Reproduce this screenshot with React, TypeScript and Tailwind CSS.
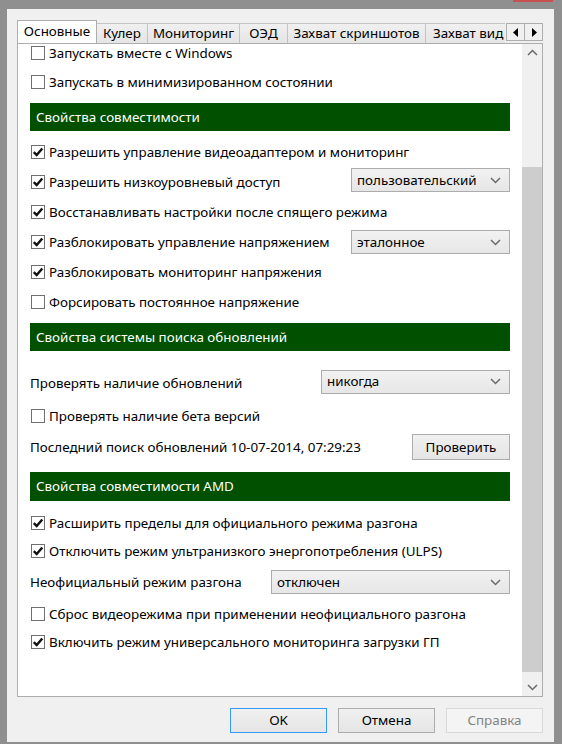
import React from "react";

function CheckBox({ checked }: { checked: boolean }) {
  return (
    <div className="w-[14px] h-[14px] border border-[#707070] bg-white flex items-center justify-center shrink-0">
      {checked && (
        <svg width="12" height="12" viewBox="0 0 12 12">
          <path d="M1.8 6.2 L4.7 9.1 L10.3 2.5" fill="none" stroke="#111" strokeWidth="2.4" />
        </svg>
      )}
    </div>
  );
}

function Chevron({ dir = "down" }: { dir?: "down" | "up" }) {
  return (
    <svg width="11" height="7" viewBox="0 0 11 7">
      <path
        d={dir === "down" ? "M1 1 L5.5 5.5 L10 1" : "M1 6 L5.5 1.5 L10 6"}
        fill="none"
        stroke="#6a6a6a"
        strokeWidth="1.5"
      />
    </svg>
  );
}

function Select({ value, w }: { value: string; w: string }) {
  return (
    <div
      className={`${w} h-[24px] border border-[#acacac] bg-gradient-to-b from-[#f2f2f2] to-[#e6e6e6] flex items-center justify-between pl-[5px] pr-[8px]`}
    >
      <span>{value}</span>
      <Chevron />
    </div>
  );
}

function CheckRow({ checked, label, h, children }: { checked: boolean; label: string; h: string; children?: React.ReactNode }) {
  return (
    <div className={`${h} flex items-center justify-between shrink-0`}>
      <div className="flex items-center gap-[4px] ml-[1px]">
        <CheckBox checked={checked} />
        <span>{label}</span>
      </div>
      {children}
    </div>
  );
}

function Header({ title, h, mt }: { title: string; h: string; mt: string }) {
  return (
    <div className={`${h} ${mt} bg-[#005000] text-white flex items-center px-[6px] shrink-0`}>{title}</div>
  );
}

const tabs = [
  { name: "Кулер", w: "w-[52px]" },
  { name: "Мониторинг", w: "w-[93px]" },
  { name: "ОЭД", w: "w-[49px]" },
  { name: "Захват скриншотов", w: "w-[139px]" },
];

export default function App() {
  return (
    <div className="w-[562px] h-[744px] bg-[#8f8f8f] relative overflow-hidden text-[13.4px] text-black [font-family:'Noto_Sans','Liberation_Sans',sans-serif]">
      {/* край кнопки закрытия окна */}
      <div className="absolute left-[513px] top-0 w-[40px] h-[2px] bg-[#c75050]" />

      <div className="ml-[7px] mt-[9px] w-[547px] h-[733px] bg-[#f0f0f0] pl-[10px] pt-[11px] flex flex-col">
        {/* Tabs */}
        <div className="w-[526px] h-[23px] flex items-end">
          <div className="w-[488px] h-[24px] flex items-end overflow-hidden">
            <div className="relative z-10 w-[80px] h-[24px] mb-[-1px] bg-white border border-b-0 border-[#adadad] flex items-center justify-center pb-[2px] shrink-0">
              Основные
            </div>
            {tabs.map((t) => (
              <div
                key={t.name}
                className={`${t.w} h-[20px] -ml-px bg-gradient-to-b from-[#f0f0f0] to-[#e5e5e5] border border-b-0 border-[#c4c4c4] flex items-center justify-center shrink-0`}
              >
                {t.name}
              </div>
            ))}
            <div className="w-[90px] h-[20px] -ml-px bg-gradient-to-b from-[#f0f0f0] to-[#e5e5e5] border border-b-0 border-[#c4c4c4] flex items-center pl-[7px] shrink-0 whitespace-nowrap">
              Захват вид
            </div>
          </div>
          <div className="flex ml-[1px] mb-[2px]">
            <div className="w-[19px] h-[18px] border border-[#adadad] bg-[#f0f0f0] flex items-center justify-center">
              <svg width="6" height="9" viewBox="0 0 6 9"><path d="M5 0 L0 4.5 L5 9Z" fill="#000" /></svg>
            </div>
            <div className="w-[19px] h-[18px] -ml-px border border-[#adadad] bg-[#f0f0f0] flex items-center justify-center">
              <svg width="6" height="9" viewBox="0 0 6 9"><path d="M1 0 L6 4.5 L1 9Z" fill="#000" /></svg>
            </div>
          </div>
        </div>

        {/* Panel */}
        <div className="w-[526px] h-[654px] border border-[#adadad] bg-white flex">
          <div className="flex-1 flex flex-col px-[12px] overflow-hidden">
            <CheckRow h="h-[18px]" checked={false} label="Запускать вместе с Windows" />
            <div className="mt-[6px]">
              <CheckRow h="h-[28px]" checked={false} label="Запускать в минимизированном состоянии" />
            </div>
            <Header h="h-[28px]" mt="mt-[7px]" title="Свойства совместимости" />
            <div className="mt-[6px] flex flex-col">
              <CheckRow h="h-[30px]" checked label="Разрешить управление видеоадаптером и мониторинг" />
              <CheckRow h="h-[30px]" checked label="Разрешить низкоуровневый доступ">
                <div className="mb-[4px]">
                  <Select w="w-[159px]" value="пользовательский" />
                </div>
              </CheckRow>
              <CheckRow h="h-[30px]" checked label="Восстанавливать настройки после спящего режима" />
              <CheckRow h="h-[30px]" checked label="Разблокировать управление напряжением">
                <Select w="w-[159px]" value="эталонное" />
              </CheckRow>
              <CheckRow h="h-[30px]" checked label="Разблокировать мониторинг напряжения" />
              <CheckRow h="h-[30px]" checked={false} label="Форсировать постоянное напряжение" />
            </div>
            <Header h="h-[28px]" mt="mt-[6px]" title="Свойства системы поиска обновлений" />
            <div className="mt-[17px] h-[30px] flex items-center justify-between shrink-0">
              <span>Проверять наличие обновлений</span>
              <div className="mb-[3px]">
                <Select w="w-[189px]" value="никогда" />
              </div>
            </div>
            <div className="mt-[3px]">
              <CheckRow h="h-[30px]" checked={false} label="Проверять наличие бета версий" />
            </div>
            <div className="mt-[1px] h-[30px] flex items-center justify-between shrink-0">
              <span>Последний поиск обновлений 10-07-2014, 07:29:23</span>
              <div className="w-[98px] h-[26px] border border-[#acacac] bg-gradient-to-b from-[#f0f0f0] to-[#e5e5e5] flex items-center justify-center">
                Проверить
              </div>
            </div>
            <Header h="h-[29px]" mt="mt-[10px]" title="Свойства совместимости AMD" />
            <div className="mt-[8px] flex flex-col">
              <CheckRow h="h-[28px]" checked label="Расширить пределы для официального режима разгона" />
              <CheckRow h="h-[28px]" checked label="Отключить режим ультранизкого энергопотребления (ULPS)" />
              <div className="h-[34px] flex items-center justify-between shrink-0">
                <span>Неофициальный режим разгона</span>
                <Select w="w-[239px]" value="отключен" />
              </div>
              <CheckRow h="h-[30px]" checked={false} label="Сброс видеорежима при применении неофициального разгона" />
              <CheckRow h="h-[26px]" checked label="Включить режим универсального мониторинга загрузки ГП" />
            </div>
          </div>

          {/* Scrollbar */}
          <div className="w-[20px] bg-[#f0f0f0] flex flex-col">
            <div className="h-[17px] flex items-center justify-center">
              <Chevron dir="up" />
            </div>
            <div className="h-[106px]" />
            <div className="h-[505px] bg-[#cdcdcd]" />
            <div className="flex-1" />
            <div className="h-[17px] flex items-center justify-center">
              <Chevron />
            </div>
          </div>
        </div>

        {/* Buttons */}
        <div className="w-[526px] mt-[11px] flex justify-end gap-[11px]">
          <div className="w-[97px] h-[25px] border border-[#3399ff] bg-gradient-to-b from-[#f0f0f0] to-[#e5e5e5] flex items-center justify-center">
            OK
          </div>
          <div className="w-[97px] h-[25px] border border-[#acacac] bg-gradient-to-b from-[#f0f0f0] to-[#e5e5e5] flex items-center justify-center">
            Отмена
          </div>
          <div className="w-[97px] h-[25px] border border-[#d9d9d9] bg-[#f4f4f4] text-[#838383] flex items-center justify-center">
            Справка
          </div>
        </div>
      </div>
    </div>
  );
}
